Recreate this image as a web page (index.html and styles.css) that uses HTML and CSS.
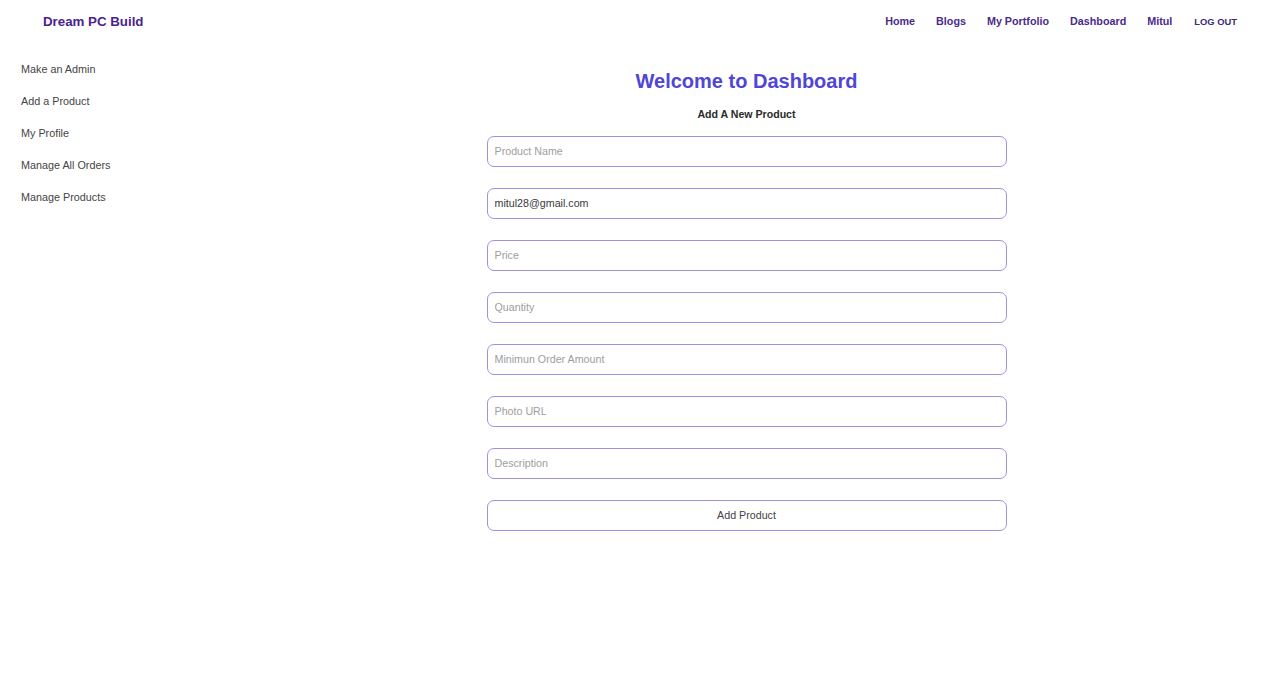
FILE: index.html
```html
<!DOCTYPE html>
<html lang="en">
<head>
<meta charset="utf-8">
<title>Dream PC Build - Dashboard</title>
<link rel="stylesheet" href="styles.css">
</head>
<body>
<header class="navbar">
  <a class="brand" href="#">Dream PC Build</a>
  <nav class="nav-links">
    <a href="#">Home</a>
    <a href="#">Blogs</a>
    <a href="#">My Portfolio</a>
    <a href="#">Dashboard</a>
    <a href="#">Mitul</a>
    <button class="logout">LOG OUT</button>
  </nav>
</header>
<div class="layout">
  <aside class="sidebar">
    <a href="#">Make an Admin</a>
    <a href="#">Add a Product</a>
    <a href="#">My Profile</a>
    <a href="#">Manage All Orders</a>
    <a href="#">Manage Products</a>
  </aside>
  <main class="content">
    <h1 class="title">Welcome to Dashboard</h1>
    <h2 class="subtitle">Add A New Product</h2>
    <form class="product-form">
      <input class="field" type="text" placeholder="Product Name">
      <input class="field" type="email" value="mitul28@gmail.com">
      <input class="field" type="text" placeholder="Price">
      <input class="field" type="text" placeholder="Quantity">
      <input class="field" type="text" placeholder="Minimun Order Amount">
      <input class="field" type="text" placeholder="Photo URL">
      <input class="field" type="text" placeholder="Description">
      <button class="field submit" type="button">Add Product</button>
    </form>
  </main>
</div>
</body>
</html>
```
FILE: styles.css
```css
* { box-sizing: border-box; }
html, body {
  margin: 0;
  padding: 0;
  background: #ffffff;
  font-family: "Liberation Sans", Arial, sans-serif;
}
a { text-decoration: none; }

.navbar {
  height: 42px;
  display: flex;
  align-items: center;
  justify-content: space-between;
  padding: 0 43px 0 43px;
}
.brand {
  font-size: 13.3px;
  font-weight: bold;
  color: #4a2390;
}
.nav-links {
  display: flex;
  align-items: center;
  gap: 21px;
}
.nav-links a {
  font-size: 10.75px;
  font-weight: bold;
  color: #4a2a8c;
}
.logout {
  border: none;
  background: none;
  padding: 0;
  font-family: inherit;
  font-size: 9.4px;
  font-weight: bold;
  color: #3f2a78;
  margin-left: 1px;
}

.layout {
  display: flex;
}
.sidebar {
  width: 213px;
  flex-shrink: 0;
  display: flex;
  flex-direction: column;
  gap: 19px;
  padding: 21px 0 0 21px;
}
.sidebar a {
  font-size: 10.8px;
  line-height: 13px;
  color: #444;
}

.content {
  flex: 1;
  display: flex;
  flex-direction: column;
  align-items: center;
  padding-top: 28px;
}
.title {
  margin: 0;
  font-size: 20px;
  line-height: 23px;
  font-weight: bold;
  color: #4f46d6;
}
.subtitle {
  margin: 15px 0 0 0;
  font-size: 10.6px;
  line-height: 13px;
  font-weight: bold;
  color: #2a2a2a;
}
.product-form {
  margin-top: 15px;
  display: flex;
  flex-direction: column;
  gap: 21px;
  width: 520px;
}
.field {
  height: 31px;
  width: 100%;
  border: 1px solid #a292dc;
  border-radius: 7px;
  background: #fff;
  padding: 0 7px 1px 7px;
  font-family: "Liberation Sans", Arial, sans-serif;
  font-size: 10.7px;
  color: #3a3a3a;
  outline: none;
}
.field::placeholder {
  color: #9e9e9e;
}
.submit {
  text-align: center;
  color: #444;
  cursor: pointer;
}
```
